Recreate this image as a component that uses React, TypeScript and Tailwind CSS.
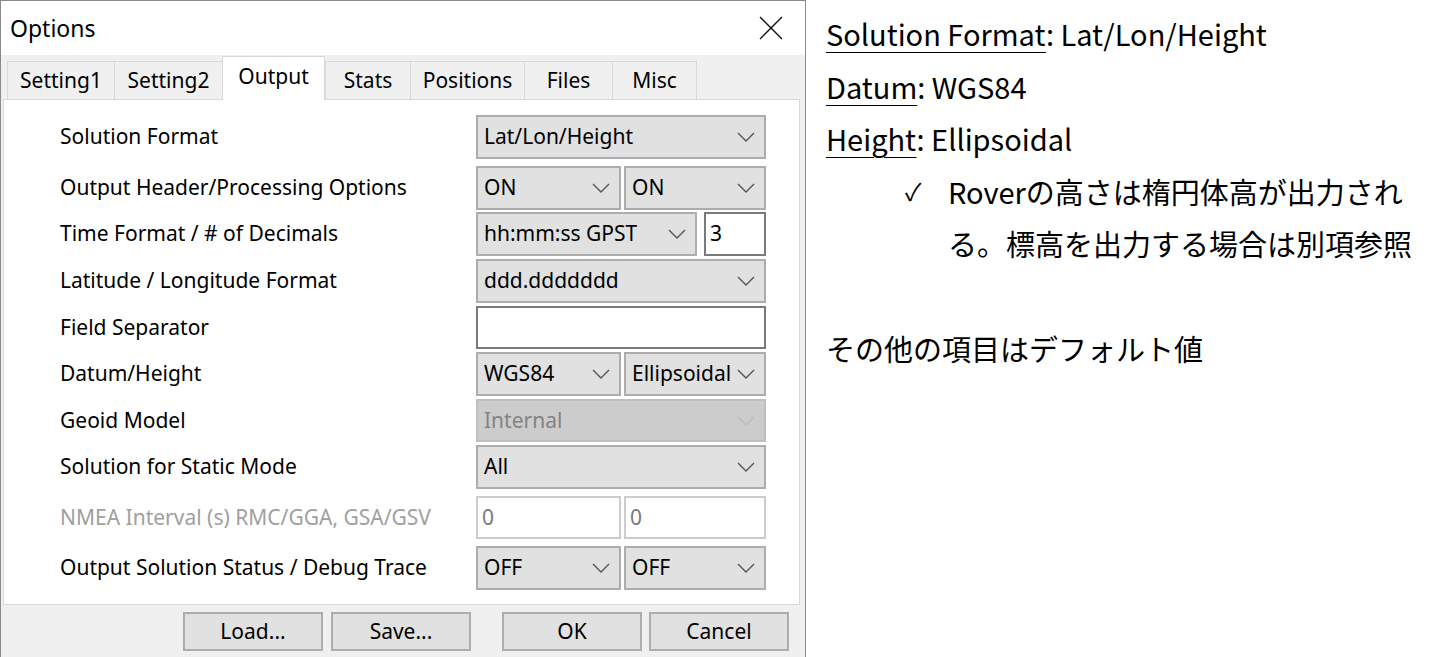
import React from 'react'

const ui = { fontFamily: '"Noto Sans", "Open Sans", sans-serif' }
const jp = { fontFamily: '"Noto Sans CJK JP", "Noto Sans", sans-serif' }

// small chevron used by every combo box
const Chevron = ({ disabled }: { disabled?: boolean }) => (
  <svg width="18" height="10" viewBox="0 0 18 10" className="shrink-0">
    <path
      d="M1 1 L9 9 L17 1"
      fill="none"
      stroke={disabled ? '#bdbdbd' : '#555555'}
      strokeWidth="1.4"
    />
  </svg>
)

const Combo = ({ value, width, disabled }: { value: string; width: string; disabled?: boolean }) => (
  <div
    className={`${width} h-full flex items-center justify-between pl-[6px] pr-[9px] border-2 ${
      disabled ? 'bg-[#cccccc] border-[#bfbfbf] text-[#838383]' : 'bg-[#e1e1e1] border-[#adadad] text-black'
    }`}
  >
    <span className="whitespace-nowrap">{value}</span>
    <Chevron disabled={disabled} />
  </div>
)

const Edit = ({ value, width, disabled }: { value: string; width: string; disabled?: boolean }) => (
  <div
    className={`${width} h-full flex items-center pl-[4px] border-2 bg-white ${
      disabled ? 'border-[#cccccc] text-[#7a7a7a]' : 'border-[#7a7a7a] text-black'
    }`}
  >
    {value}
  </div>
)

type Row = {
  label: string
  mt: string
  h: string
  disabled?: boolean
  controls: React.ReactNode
}

const rows: Row[] = [
  { label: 'Solution Format', mt: 'mt-0', h: 'h-[44px]', controls: <Combo value="Lat/Lon/Height" width="w-[290px]" /> },
  {
    label: 'Output Header/Processing Options',
    mt: 'mt-[7px]',
    h: 'h-[44px]',
    controls: (
      <>
        <Combo value="ON" width="w-[145px]" />
        <Combo value="ON" width="w-[142px]" />
      </>
    ),
  },
  {
    label: 'Time Format / # of Decimals',
    mt: 'mt-[2px]',
    h: 'h-[44px]',
    controls: (
      <>
        <Combo value="hh:mm:ss GPST" width="w-[221px]" />
        <div className="w-[1px]" />
        <Edit value="3" width="w-[62px]" />
      </>
    ),
  },
  { label: 'Latitude / Longitude Format', mt: 'mt-[3px]', h: 'h-[44px]', controls: <Combo value="ddd.ddddddd" width="w-[290px]" /> },
  { label: 'Field Separator', mt: 'mt-[3px]', h: 'h-[43px]', controls: <Edit value="" width="w-[290px]" /> },
  {
    label: 'Datum/Height',
    mt: 'mt-[3px]',
    h: 'h-[44px]',
    controls: (
      <>
        <Combo value="WGS84" width="w-[145px]" />
        <Combo value="Ellipsoidal" width="w-[142px]" />
      </>
    ),
  },
  { label: 'Geoid Model', mt: 'mt-[3px]', h: 'h-[43px]', controls: <Combo value="Internal" width="w-[290px]" disabled /> },
  { label: 'Solution for Static Mode', mt: 'mt-[3px]', h: 'h-[44px]', controls: <Combo value="All" width="w-[290px]" /> },
  {
    label: 'NMEA Interval (s) RMC/GGA, GSA/GSV',
    mt: 'mt-[7px]',
    h: 'h-[43px]',
    disabled: true,
    controls: (
      <>
        <Edit value="0" width="w-[145px]" disabled />
        <Edit value="0" width="w-[142px]" disabled />
      </>
    ),
  },
  {
    label: 'Output Solution Status / Debug Trace',
    mt: 'mt-[7px]',
    h: 'h-[44px]',
    controls: (
      <>
        <Combo value="OFF" width="w-[145px]" />
        <Combo value="OFF" width="w-[142px]" />
      </>
    ),
  },
]

const tabs = ['Setting1', 'Setting2', 'Output', 'Stats', 'Positions', 'Files', 'Misc']
const tabWidths: Record<string, string> = {
  Setting1: 'w-[107px]',
  Setting2: 'w-[108px]',
  Output: 'w-[103px]',
  Stats: 'w-[85px]',
  Positions: 'w-[114px]',
  Files: 'w-[88px]',
  Misc: 'w-[85px]',
}

const Button = ({ label, ml }: { label: string; ml: string }) => (
  <div className={`${ml} w-[140px] h-[39px] flex items-center justify-center bg-[#e1e1e1] border-2 border-[#adadad]`}>
    {label}
  </div>
)

const OptionsDialog = () => (
  <div className="w-[806px] h-[657px] shrink-0 flex flex-col border-l border-t border-r border-[#8a8a8a] text-[21px] text-black" style={ui}>
    {/* title bar */}
    <div className="h-[54px] bg-white flex items-center justify-between pl-[9px] pr-[22px]">
      <span className="text-[23px]">Options</span>
      <svg width="24" height="24" viewBox="0 0 24 24">
        <path d="M1 1 L23 23 M23 1 L1 23" stroke="#111" strokeWidth="1.4" fill="none" />
      </svg>
    </div>

    <div className="flex-1 bg-[#f0f0f0] px-[2px]">
      {/* tabs */}
      <div className="h-[44px] flex items-end pl-[4px]">
        {tabs.map((t) =>
          t === 'Output' ? (
            <div
              key={t}
              className={`${tabWidths[t]} h-[44px] -mb-px relative z-10 bg-white border-x border-t border-[#d9d9d9] flex items-start justify-center pt-[4px]`}
            >
              {t}
            </div>
          ) : (
            <div
              key={t}
              className={`${tabWidths[t]} h-[38px] bg-[#f0f0f0] border-l border-t border-[#d9d9d9] last:border-r flex items-center justify-center`}
            >
              {t}
            </div>
          )
        )}
      </div>

      {/* tab page */}
      <div className="w-[797px] h-[506px] bg-white border border-[#d9d9d9] pt-[15px] pl-[56px] flex flex-col">
        {rows.map((r) => (
          <div key={r.label} className={`${r.mt} ${r.h} flex items-center`}>
            <div className={`w-[416px] whitespace-nowrap ${r.disabled ? 'text-[#a0a0a0]' : ''}`}>{r.label}</div>
            <div className="h-full flex gap-[3px]">{r.controls}</div>
          </div>
        ))}
      </div>

      {/* buttons */}
      <div className="flex mt-[7px]">
        <Button label="Load..." ml="ml-[180px]" />
        <Button label="Save..." ml="ml-[8px]" />
        <Button label="OK" ml="ml-[31px]" />
        <Button label="Cancel" ml="ml-[7px]" />
      </div>
    </div>
  </div>
)

const Notes = () => (
  <div className="pl-[20px] pt-[7px] text-[29px] leading-[52.5px] text-black" style={jp}>
    <div>
      <span className="underline decoration-1 underline-offset-[6px]">Solution Format</span>: Lat/Lon/Height
    </div>
    <div>
      <span className="underline decoration-1 underline-offset-[6px]">Datum</span>: WGS84
    </div>
    <div>
      <span className="underline decoration-1 underline-offset-[6px]">Height</span>: Ellipsoidal
    </div>
    <div className="flex pl-[79px]">
      <span className="w-[43px] shrink-0 text-[24px]">✓</span>
      <div className="whitespace-nowrap">
        Roverの高さは楕円体高が出力され
        <br />
        る。標高を出力する場合は別項参照
      </div>
    </div>
    <div className="h-[52.5px]" />
    <div>その他の項目はデフォルト値</div>
  </div>
)

export default function App() {
  return (
    <div className="w-[1444px] h-[657px] bg-white flex overflow-hidden">
      <OptionsDialog />
      <Notes />
    </div>
  )
}
